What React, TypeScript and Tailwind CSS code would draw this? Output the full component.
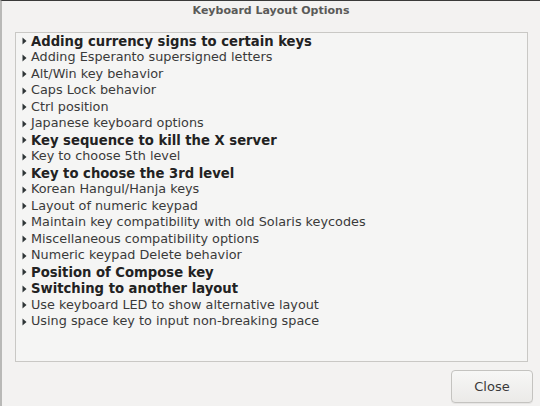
const items: { label: string; bold?: boolean }[] = [
  { label: "Adding currency signs to certain keys", bold: true },
  { label: "Adding Esperanto supersigned letters" },
  { label: "Alt/Win key behavior" },
  { label: "Caps Lock behavior" },
  { label: "Ctrl position" },
  { label: "Japanese keyboard options" },
  { label: "Key sequence to kill the X server", bold: true },
  { label: "Key to choose 5th level" },
  { label: "Key to choose the 3rd level", bold: true },
  { label: "Korean Hangul/Hanja keys" },
  { label: "Layout of numeric keypad" },
  { label: "Maintain key compatibility with old Solaris keycodes" },
  { label: "Miscellaneous compatibility options" },
  { label: "Numeric keypad Delete behavior" },
  { label: "Position of Compose key", bold: true },
  { label: "Switching to another layout", bold: true },
  { label: "Use keyboard LED to show alternative layout" },
  { label: "Using space key to input non-breaking space" },
];

function Expander() {
  return (
    <svg width="5" height="8" viewBox="0 0 5 8" className="shrink-0">
      <path d="M0.5 0.5 L4.5 4 L0.5 7.5 Z" fill="#2e3436" />
    </svg>
  );
}

export default function App() {
  return (
    <div
      className="w-[540px] h-[406px] bg-[#f3f2f1] border-l-2 border-l-[#b9b9b7] border-t border-t-[#3a3a3a] flex flex-col overflow-hidden"
      style={{ fontFamily: '"DejaVu Sans", sans-serif' }}
    >
      <div className="h-[21px] flex items-center justify-center text-[11px] font-bold text-[#5a5a58]">
        Keyboard Layout Options
      </div>
      <div className="ml-[13px] mr-[12px] mt-[10px] h-[330px] border border-[#c9c8c5] bg-[#f5f5f4] pl-[6px]">
        {items.map((it) => (
          <div key={it.label} className="h-[16.5px] flex items-center gap-[4px]">
            <Expander />
            <span
              className={
                it.bold
                  ? "text-[13.2px] font-bold text-[#222222] leading-none whitespace-nowrap"
                  : "text-[12.8px] text-[#3a3a3a] leading-none whitespace-nowrap"
              }
            >
              {it.label}
            </span>
          </div>
        ))}
      </div>
      <div className="flex justify-end mt-[8px] mr-[7px]">
        <button className="w-[82px] h-[33px] rounded-[4px] border border-[#c4c3c0] bg-gradient-to-b from-[#f7f7f6] to-[#ebeae8] text-[13px] text-[#3a3a3a] shadow-[0_1px_0_rgba(0,0,0,0.05)]">
          Close
        </button>
      </div>
    </div>
  );
}
